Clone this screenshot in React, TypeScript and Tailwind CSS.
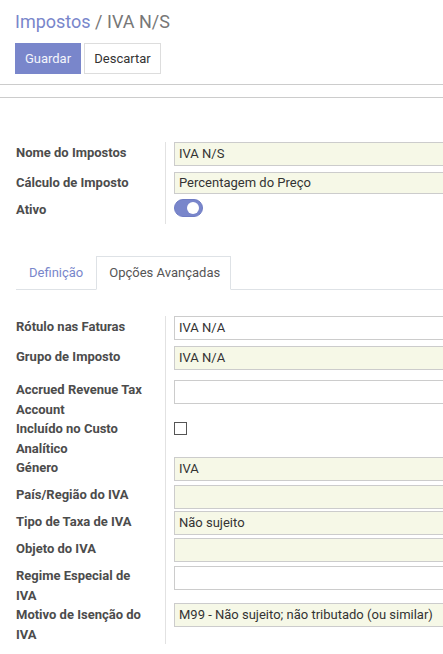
type Row = {
  label: string[];
  h: string;
  kind: 'input' | 'toggle' | 'check';
  value?: string;
  required?: boolean;
  inputH?: string;
  inputMt?: string;
};

const topRows: Row[] = [
  { label: ['Nome do Impostos'], h: 'h-[30px]', kind: 'input', value: 'IVA N/S', required: true },
  { label: ['Cálculo de Imposto'], h: 'h-[27px]', kind: 'input', value: 'Percentagem do Preço', required: true, inputH: 'h-[22px]' },
  { label: ['Ativo'], h: 'h-[25px]', kind: 'toggle' },
];

const advancedRows: Row[] = [
  { label: ['Rótulo nas Faturas'], h: 'h-[30px]', kind: 'input', value: 'IVA N/A' },
  { label: ['Grupo de Imposto'], h: 'h-[33px]', kind: 'input', value: 'IVA N/A', required: true },
  { label: ['Accrued Revenue Tax', 'Account'], h: 'h-[39px]', kind: 'input', inputMt: 'mt-px' },
  { label: ['Incluído no Custo', 'Analítico'], h: 'h-[39px]', kind: 'check' },
  { label: ['Género'], h: 'h-[27px]', kind: 'input', value: 'IVA', required: true },
  { label: ['País/Região do IVA'], h: 'h-[27px]', kind: 'input', required: true, inputMt: 'mt-px' },
  { label: ['Tipo de Taxa de IVA'], h: 'h-[27px]', kind: 'input', value: 'Não sujeito', required: true },
  { label: ['Objeto do IVA'], h: 'h-[27px]', kind: 'input', required: true },
  { label: ['Regime Especial de', 'IVA'], h: 'h-[39px]', kind: 'input', inputMt: 'mt-px' },
  { label: ['Motivo de Isenção do', 'IVA'], h: 'h-[40px]', kind: 'input', value: 'M99 - Não sujeito; não tributado (ou similar)', required: true, inputMt: '-mt-px' },
];

function Field({ row }: { row: Row }) {
  if (row.kind === 'toggle') {
    return (
      <div className="w-[29px] h-[18px] rounded-full bg-[#7986cb] border border-[#6f7cc4] flex items-center justify-end pr-[3px]">
        <div className="w-[12px] h-[12px] rounded-full bg-white" />
      </div>
    );
  }
  if (row.kind === 'check') {
    return <div className="mt-1 w-[13px] h-[13px] border border-[#555] bg-white" />;
  }
  return (
    <div
      className={`${row.inputH ?? 'h-[24px]'} ${row.inputMt ?? ''} w-[320px] shrink-0 border border-[#cccccc] px-1 flex items-center text-[13px] text-[#333] ${
        row.required ? 'bg-[#f6f8e7]' : 'bg-white'
      }`}
    >
      {row.value}
    </div>
  );
}

function FormRows({ rows }: { rows: Row[] }) {
  return (
    <div className="flex flex-col">
      {rows.map((row) => (
        <div key={row.label.join(' ')} className={`flex ${row.h}`}>
          <div className="w-[165px] shrink-0 pl-4 pt-px font-bold text-[13px] leading-5 text-[#4c4c4c]">
            {row.label.map((l) => (
              <div key={l}>{l}</div>
            ))}
          </div>
          <div className="flex-1 border-l border-[#e2e2e2] pl-2">
            <Field row={row} />
          </div>
        </div>
      ))}
    </div>
  );
}

export default function App() {
  return (
    <div className="min-h-screen w-full overflow-hidden bg-white font-['Roboto','Liberation_Sans',sans-serif] text-[13px] text-[#333]">
      {/* Control panel */}
      <div className="px-[15px] pt-[10px] pb-[10px] border-b border-[#cccccc]">
        <div className="h-6 text-[18px] leading-6">
          <span className="text-[#7986cb]">Impostos</span>
          <span className="text-[#777]"> / IVA N/S</span>
        </div>
        <div className="mt-[9px] flex gap-[3px]">
          <button className="h-[31px] w-[66px] bg-[#7986cb] text-[13px] text-[#f4f5fb]">Guardar</button>
          <button className="h-[31px] w-[77px] border border-[#dddddd] bg-white text-[13px] text-[#333]">
            Descartar
          </button>
        </div>
      </div>

      {/* Sheet */}
      <div className="mt-[12px] border-t border-[#cccccc] pt-[44px]">
        <FormRows rows={topRows} />

        {/* Tabs */}
        <div className="mt-[32px] ml-4 flex h-[33px] border-b border-[#dee2e6] box-content">
          <div className="h-[34px] -mb-px px-3 border border-transparent flex items-center text-[#7986cb]">
            Definição
          </div>
          <div className="h-[34px] -mb-px pl-3 pr-[10px] border border-[#dee2e6] border-b-white bg-white flex items-center text-[#555]">
            Opções Avançadas
          </div>
        </div>

        <div className="mt-[26px]">
          <FormRows rows={advancedRows} />
        </div>
      </div>
    </div>
  );
}
